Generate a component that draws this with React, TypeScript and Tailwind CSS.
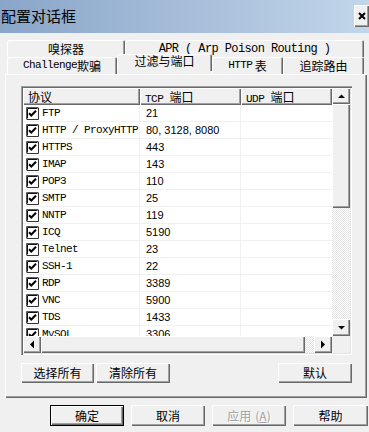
import React from "react";

const cjk = "font-['SimSun','Noto_Sans_CJK_SC',sans-serif]";
const mono = "font-['Liberation_Mono','Noto_Sans_CJK_SC',monospace]";

const raised =
  "bg-[#f0f0f0] shadow-[inset_1px_1px_0_#fff,inset_-1px_-1px_0_#696969,inset_-2px_-2px_0_#a0a0a0]";

const rows: [string, string][] = [
  ["FTP", "21"],
  ["HTTP / ProxyHTTP", "80, 3128, 8080"],
  ["HTTPS", "443"],
  ["IMAP", "143"],
  ["POP3", "110"],
  ["SMTP", "25"],
  ["NNTP", "119"],
  ["ICQ", "5190"],
  ["Telnet", "23"],
  ["SSH-1", "22"],
  ["RDP", "3389"],
  ["VNC", "5900"],
  ["TDS", "1433"],
  ["MySQL", "3306"],
];

function Arrow({ dir }: { dir: "up" | "down" | "left" | "right" }) {
  const pts = {
    up: "1,5 8,5 4.5,1.5",
    down: "1,1 8,1 4.5,4.5",
    left: "5,0.5 5,8.5 1,4.5",
    right: "1,0.5 1,8.5 5,4.5",
  }[dir];
  const vertical = dir === "up" || dir === "down";
  return (
    <svg
      width={vertical ? 9 : 6}
      height={vertical ? 6 : 9}
      viewBox={vertical ? "0 0 9 6" : "0 0 6 9"}
    >
      <polygon points={pts} fill="#000" />
    </svg>
  );
}

function CheckBox() {
  return (
    <svg width="13" height="13" viewBox="0 0 13 13" className="shrink-0">
      <rect x="0" y="0" width="13" height="13" fill="#fff" />
      <path d="M0.5 12.5V0.5H12.5" stroke="#555" fill="none" />
      <path d="M1.5 11.5V1.5H11.5" stroke="#111" fill="none" />
      <path d="M1 12.5H12.5V1" stroke="#333" fill="none" />
      <path d="M3 6.2L5.3 8.5L10 3.8" stroke="#000" strokeWidth="2" fill="none" />
    </svg>
  );
}

const checker =
  "bg-[repeating-conic-gradient(#fff_0%_25%,#e3e3e3_0%_50%)] bg-[length:2px_2px]";

function ListView() {
  return (
    <div className="ml-[16px] h-[269px] w-[331px] p-[2px] shadow-[inset_1px_1px_0_#a0a0a0,inset_2px_2px_0_#696969,inset_-1px_-1px_0_#fff,inset_-2px_-2px_0_#e3e3e3] flex flex-col">
      <div className="flex flex-1 min-h-0 bg-white">
        <div className="flex-1 overflow-hidden">
          <div className={`flex h-[17px] text-[12px] leading-[17px] text-black ${cjk}`}>
            <div className={`w-[117px] pl-[5px] ${raised}`}>协议</div>
            <div className={`w-[101px] pl-[5px] ${raised}`}>
              <span className={mono + " text-[11px] tracking-[-0.5px]"}>TCP </span>端口
            </div>
            <div className={`flex-1 pl-[5px] ${raised}`}>
              <span className={mono + " text-[11px] tracking-[-0.5px]"}>UDP </span>端口
            </div>
          </div>
          {rows.map(([name, port]) => (
            <div key={name} className="flex h-[17px] border-b border-[#f0f0f0] text-black">
              <div className="w-[117px] flex items-center pl-[3px] gap-[3px] border-r border-[#f0f0f0]">
                <CheckBox />
                <span className={`${mono} text-[11px] tracking-[-0.6px] whitespace-nowrap`}>{name}</span>
              </div>
              <div className="w-[101px] flex items-center pl-[6px] border-r border-[#f0f0f0] font-['Liberation_Sans',sans-serif] text-[11px]">
                {port}
              </div>
              <div className="flex-1" />
            </div>
          ))}
        </div>
        <div className="w-[18px] flex flex-col bg-[#f0f0f0]">
          <div className={`h-[16px] flex items-center justify-center ${raised}`}>
            <Arrow dir="up" />
          </div>
          <div className={`h-[104px] ${raised}`} />
          <div className={`flex-1 ${checker}`} />
          <div className={`h-[17px] flex items-center justify-center ${raised}`}>
            <Arrow dir="down" />
          </div>
        </div>
      </div>
      <div className="flex h-[17px] bg-[#f0f0f0]">
        <div className={`w-[18px] flex items-center justify-center ${raised}`}>
          <Arrow dir="left" />
        </div>
        <div className={`w-[264px] ${raised}`} />
        <div className={`flex-1 ${checker}`} />
        <div className={`w-[18px] flex items-center justify-center ${raised}`}>
          <Arrow dir="right" />
        </div>
        <div className="w-[18px] bg-[#f0f0f0]" />
      </div>
    </div>
  );
}

function Tab({ w, children, className = "" }: { w: string; children: React.ReactNode; className?: string }) {
  return (
    <div
      className={`${w} h-full flex items-center justify-center bg-[#f0f0f0] rounded-t-[2px] shadow-[inset_1px_1px_0_#fff,inset_-1px_0_0_#696969,inset_-2px_0_0_#a0a0a0] text-[12px] text-black whitespace-nowrap ${className}`}
    >
      {children}
    </div>
  );
}

function Btn({
  w,
  children,
  className = "",
  disabled = false,
}: {
  w: string;
  children: React.ReactNode;
  className?: string;
  disabled?: boolean;
}) {
  return (
    <div
      className={`${w} flex items-center justify-center ${raised} text-[12px] ${
        disabled ? "text-[#a0a0a0] [text-shadow:1px_1px_0_#fff]" : "text-black"
      } ${cjk} ${className}`}
    >
      {children}
    </div>
  );
}

export default function App() {
  return (
    <div className="w-[369px] h-[432px] bg-[#f0f0f0] overflow-hidden">
      <div className="h-[33px] flex items-center justify-between bg-gradient-to-r from-[#89a5c8] to-[#c2d6ea]">
        <div className={`pl-[1px] text-[15px] text-black ${cjk}`}>配置对话框</div>
        <div className={`h-[22px] w-[15px] mb-[2px] flex items-center justify-center ${raised}`}>
          <svg width="8" height="8" viewBox="0 0 8 8">
            <path d="M1 1L7 7M7 1L1 7" stroke="#000" strokeWidth="2" />
          </svg>
        </div>
      </div>

      <div className="pl-[7px] pr-[5px] pt-[7px]">
        <div className="flex h-[17px]">
          <Tab w="w-[118px]" className={cjk}>嗅探器</Tab>
          <Tab w="w-[239px]" className={mono + " text-[11px] tracking-[-0.6px]"}>
            APR ( Arp Poison Routing )
          </Tab>
        </div>
        <div className="flex h-[17px] relative z-10">
          <Tab w="w-[110px]">
            <span className={mono + " text-[11px] tracking-[-0.6px]"}>Challenge</span>
            <span className={cjk}>欺骗</span>
          </Tab>
          <Tab w="w-[95px]" className={`h-[21px] -mt-[3px] pb-[3px] ${cjk}`}>
            过滤与端口
          </Tab>
          <Tab w="w-[71px]">
            <span className={mono + " text-[11px] tracking-[-0.6px]"}>HTTP </span>
            <span className={cjk}>&nbsp;表</span>
          </Tab>
          <Tab w="w-[81px]" className={cjk}>追踪路由</Tab>
        </div>
      </div>

      <div className="ml-[5px] w-[362px] h-[324px] pt-[12px] flex flex-col shadow-[inset_1px_1px_0_#fff,inset_-1px_-1px_0_#696969,inset_-2px_-2px_0_#a0a0a0]">
        <ListView />
        <div className="flex mt-[8px] ml-[16px] h-[20px]">
          <Btn w="w-[73px]">选择所有</Btn>
          <Btn w="w-[74px]" className="ml-[2px]">清除所有</Btn>
          <Btn w="w-[74px]" className="ml-auto mr-[15px]">默认</Btn>
        </div>
      </div>

      <div className="flex mt-[7px] ml-[50px] h-[21px] gap-[7px]">
        <div className="w-[74px] border border-black flex">
          <Btn w="flex-1">确定</Btn>
        </div>
        <Btn w="w-[74px]">取消</Btn>
        <Btn w="w-[74px]" disabled>
          应用<span className="ml-[4px]">(<span className="underline">A</span>)</span>
        </Btn>
        <Btn w="w-[75px]">帮助</Btn>
      </div>
    </div>
  );
}
